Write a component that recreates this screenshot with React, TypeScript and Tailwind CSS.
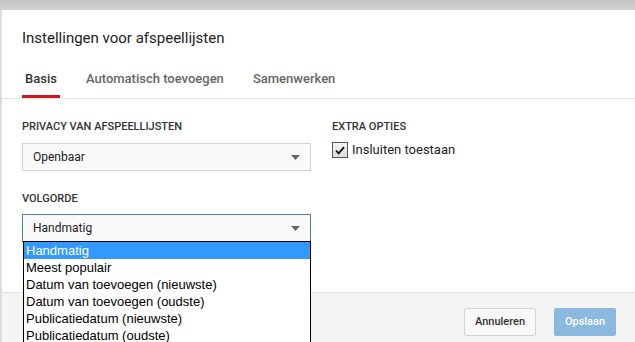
import { useState } from 'react';

const orderOptions = [
  'Handmatig',
  'Meest populair',
  'Datum van toevoegen (nieuwste)',
  'Datum van toevoegen (oudste)',
  'Publicatiedatum (nieuwste)',
  'Publicatiedatum (oudste)',
];

const tabs = ['Basis', 'Automatisch toevoegen', 'Samenwerken'];

function Caret() {
  return (
    <svg width="9" height="5" viewBox="0 0 9 5" className="shrink-0">
      <path d="M0 0h9L4.5 5z" fill="#666" />
    </svg>
  );
}

function SelectBox({ value, focused }: { value: string; focused?: boolean }) {
  return (
    <div
      className={`flex h-[28px] w-[289px] items-center justify-between border bg-[#fafafa] pl-[10px] pr-[10px] text-[12px] text-[#222] ${
        focused ? 'border-[#4d7ea8]' : 'border-[#d3d3d3]'
      }`}
    >
      <span>{value}</span>
      <Caret />
    </div>
  );
}

export default function App() {
  const [active] = useState(0);

  return (
    <div className="flex h-[342px] w-[635px] flex-col overflow-hidden bg-[#dcdcdc] font-['Roboto',sans-serif]">
      <div className="h-[10px] shrink-0 bg-gradient-to-b from-[#c2c2c2] to-[#d2d2d2]" />
      <div className="ml-[2px] flex flex-1 flex-col bg-white">
        <h2 className="pl-[20px] pt-[18px] text-[15px] leading-[20px] text-[#222]">
          Instellingen voor afspeellijsten
        </h2>

        <div className="mt-[23px] flex gap-[23px] border-b border-[#e2e2e2] pl-[20px]">
          {tabs.map((t, i) => (
            <div
              key={t}
              className={`border-b-[3px] px-[3px] pb-[8px] text-[13px] font-medium leading-[16px] ${
                i === active ? 'border-[#cc181e] text-[#333]' : 'border-transparent text-[#666]'
              }`}
            >
              {t}
            </div>
          ))}
        </div>

        <div className="flex h-[193px] pl-[20px] pt-[21px]">
          <div className="w-[310px]">
            <div className="text-[11px] font-medium leading-[14px] text-[#333]">PRIVACY VAN AFSPEELLIJSTEN</div>
            <div className="mt-[9px]">
              <SelectBox value="Openbaar" />
            </div>
            <div className="mt-[21px] text-[11px] font-medium leading-[14px] text-[#333]">VOLGORDE</div>
            <div className="relative mt-[8px]">
              <SelectBox value="Handmatig" focused />
              <ul className="absolute left-[1px] top-[27px] z-10 w-[288px] border border-black bg-white font-['Liberation_Sans',Arial,sans-serif] text-[13px] leading-[17px] text-black">
                {orderOptions.map((o, i) => (
                  <li key={o} className={`pl-[2px] ${i === 0 ? 'bg-[#3399ff] text-white' : ''}`}>
                    {o}
                  </li>
                ))}
              </ul>
            </div>
          </div>

          <div>
            <div className="text-[11px] font-medium leading-[14px] text-[#333]">EXTRA OPTIES</div>
            <label className="mt-[8px] flex items-center gap-[4px]">
              <span className="flex h-[16px] w-[16px] items-center justify-center border border-[#4a5a6a] bg-gradient-to-b from-[#f2f2f2] to-[#dcdcdc]">
                <svg width="10" height="9" viewBox="0 0 10 9">
                  <path d="M1 4.5l2.6 2.8L9 1.2" fill="none" stroke="#111" strokeWidth="1.8" />
                </svg>
              </span>
              <span className="text-[13px] leading-[16px] text-[#222]">Insluiten toestaan</span>
            </label>
          </div>
        </div>

        <div className="flex flex-1 justify-end gap-[18px] border-t border-[#e2e2e2] bg-[#f4f4f4] pr-[19px] pt-[15px]">
          <button className="h-[28px] w-[72px] rounded-[2px] border border-[#d3d3d3] bg-[#f8f8f8] text-[11px] font-medium text-[#333]">
            Annuleren
          </button>
          <button className="h-[28px] w-[62px] rounded-[2px] bg-[#8ab8de] text-[11px] font-medium text-white">
            Opslaan
          </button>
        </div>
      </div>
    </div>
  );
}
